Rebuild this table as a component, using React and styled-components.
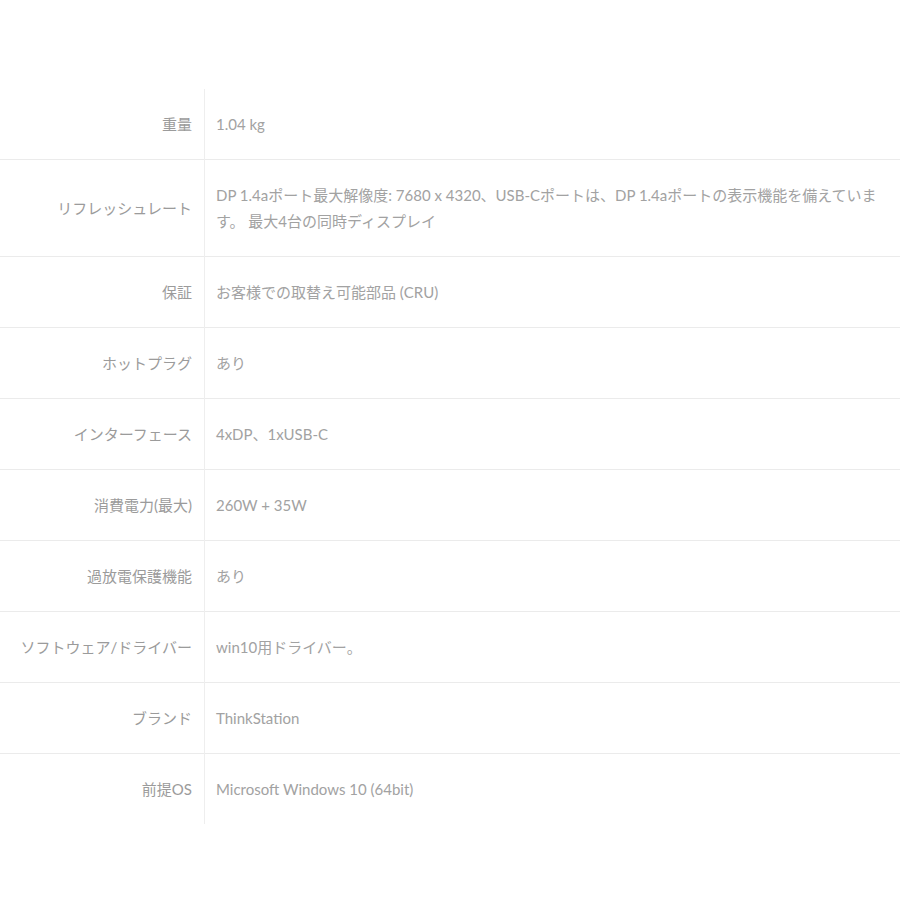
import React from 'react';
import styled, {createGlobalStyle} from 'styled-components';

const GlobalStyle = createGlobalStyle`
    body{
        margin:0;
        background:#fff;
        font-family:Lato,"Noto Sans CJK JP",sans-serif;
    }
`;

const Page = styled.div`
    padding-top:89px;
    width:900px;
`;

const SpecTable = styled.table`
    width:100%;
    border-collapse:collapse;
    font-size:15px;
    line-height:26px;
`;

const Row = styled.tr`
    border-top:${props=>props.first ? 'none' : '1px solid #ebebeb'};
`;

const Label = styled.th`
    width:192px;
    padding:22px 12px 22px 0;
    text-align:right;
    font-weight:400;
    color:#9b9b9b;
    border-right:1px solid #eeeeee;
    vertical-align:middle;
    white-space:nowrap;
`;

const Value = styled.td`
    padding:22px 12px 22px 11px;
    text-align:left;
    color:#a2a2a2;
    vertical-align:middle;
`;

const specs = [
    {label:'重量', value:'1.04 kg'},
    {label:'リフレッシュレート', value:'DP 1.4aポート最大解像度: 7680 x 4320、USB-Cポートは、DP 1.4aポートの表示機能を備えています。 最大4台の同時ディスプレイ'},
    {label:'保証', value:'お客様での取替え可能部品 (CRU)'},
    {label:'ホットプラグ', value:'あり'},
    {label:'インターフェース', value:'4xDP、1xUSB-C'},
    {label:'消費電力(最大)', value:'260W + 35W'},
    {label:'過放電保護機能', value:'あり'},
    {label:'ソフトウェア/ドライバー', value:'win10用ドライバー。'},
    {label:'ブランド', value:'ThinkStation'},
    {label:'前提OS', value:'Microsoft Windows 10 (64bit)'}
];

export default function App(){
    return(
        <>
            <GlobalStyle/>
            <Page>
                <SpecTable>
                    <tbody>
                        {specs.map((item,i)=>(
                            <Row key={item.label} first={i===0}>
                                <Label>{item.label}</Label>
                                <Value>{item.value}</Value>
                            </Row>
                        ))}
                    </tbody>
                </SpecTable>
            </Page>
        </>
    )
}
